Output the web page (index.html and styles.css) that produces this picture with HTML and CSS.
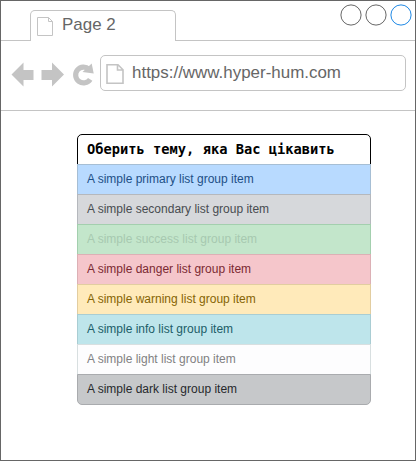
FILE: index.html
```html
<!DOCTYPE html>
<html lang="uk">
<head>
<meta charset="utf-8">
<title>Page 2</title>
<link rel="stylesheet" href="styles.css">
</head>
<body>
<div class="browser">
  <header class="tabs">
    <div class="tab-lead"></div>
    <div class="tab">
      <svg class="tab-icon" width="17" height="20" viewBox="0 0 17 20"><path d="M.5.5h11l4 4v14H.5zM11.500.5v4h4" fill="none" stroke="#c4c4c4"/></svg>
      <span>Page 2</span>
    </div>
    <div class="tab-rest">
      <svg width="72" height="22" viewBox="0 0 72 22" fill="none"><circle cx="11" cy="11" r="10.1" stroke="#666"/><circle cx="36" cy="11" r="10.1" stroke="#666"/><circle cx="61" cy="11" r="10.1" stroke="#1e88e5"/></svg>
    </div>
  </header>
  <nav class="toolbar">
    <svg class="nav-icons" width="84" height="26" viewBox="0 0 84 26">
      <g fill="#c4c4c4"><path d="M.5 13.500 12.500 1.500v7.500H22.500v10H12.500v6.500z"/><path d="M53 13.500 41 1.500v7.500H30.500v10H41v6.500z"/><path d="M80.700 2.500 82.700 12.500 71.500 11z"/></g>
      <path d="M78 8.300A7.900 7.900 0 1 0 79.200 18.300" fill="none" stroke="#c4c4c4" stroke-width="5.200"/>
    </svg>
    <div class="address">
      <svg width="18" height="20" viewBox="0 0 18 20"><path d="M1 .8h11l5 5v13.400H1zM11.500 1v5H17" fill="none" stroke="#c4c4c4" stroke-width="1.600"/></svg>
      <span>https://www.hyper-hum.com</span>
    </div>
  </nav>
  <main class="page">
    <ul class="list">
      <li class="item heading">Оберить тему, яка Вас цікавить</li>
      <li class="item primary">A simple primary list group item</li>
      <li class="item secondary">A simple secondary list group item</li>
      <li class="item success">A simple success list group item</li>
      <li class="item danger">A simple danger list group item</li>
      <li class="item warning">A simple warning list group item</li>
      <li class="item info">A simple info list group item</li>
      <li class="item light">A simple light list group item</li>
      <li class="item dark">A simple dark list group item</li>
    </ul>
  </main>
</div>
</body>
</html>
```
FILE: styles.css
```css
* { box-sizing: border-box; }
body { margin: 0; font-family: "Liberation Sans", Arial, sans-serif; }
.browser {
  width: 416px;
  height: 461px;
  border: 1px solid #666;
  background: #fff;
  color: #666;
  font-size: 16.95px;
}
.tabs { display: flex; height: 40px; }
.tab-lead { width: 29px; border-bottom: 1px solid #c4c4c4; }
.tab {
  display: flex;
  width: 146px;
  height: 31px;
  margin-top: 9px;
  padding: 6px 0 0 6px;
  gap: 8px;
  border: 1px solid #c4c4c4;
  border-bottom: 0;
  border-radius: 5px 5px 0 0;
  line-height: 18px;
}
.tab span { margin-top: -1px; }
.tab-rest {
  display: flex;
  flex: 1;
  justify-content: flex-end;
  padding: 3px 3px 0 0;
  border-bottom: 1px solid #c4c4c4;
}
.toolbar {
  display: flex;
  height: 70px;
  padding: 14px 9px 0 10px;
  border-bottom: 1px solid #c4c4c4;
}
.nav-icons { margin: 6px 5px 0 0; }
.address {
  display: flex;
  flex: 1;
  height: 36px;
  padding: 8px 0 0 5px;
  gap: 8px;
  border: 1px solid #c4c4c4;
  border-radius: 5px;
  line-height: 18px;
}
.page { padding: 23px 0 0 76px; }
.list { width: 294px; margin: 0; padding: 0; list-style: none; }
.item {
  height: 31px;
  margin-bottom: -1px;
  padding: 0 9px;
  border: 1px solid;
  font-size: 12px;
  line-height: 29px;
  white-space: nowrap;
}
.heading {
  border-color: #000;
  border-radius: 5px 5px 0 0;
  color: #000;
  font: bold 13.72px/29px "DejaVu Sans Mono", monospace;
}
.primary { background: #b8daff; border-color: #a6bed4; color: #1d4f86; }
.secondary { background: #d6d8db; border-color: #b5b8bd; color: #484c50; }
.success { background: #c3e6cb; border-color: #a3cfae; color: #a7c9b0; }
.danger { background: #f5c6cb; border-color: #dcb0b5; color: #7b2932; }
.warning { background: #ffeaba; border-color: #e2cda0; color: #856404; }
.info { background: #bee5eb; border-color: #a9cdd3; color: #1c5d68; }
.light { background: #fdfdfe; border-color: #d8dfe0; color: #818182; }
.dark { background: #c6c8ca; border-color: #a9abae; border-radius: 0 0 5px 5px; color: #26292c; }
```
